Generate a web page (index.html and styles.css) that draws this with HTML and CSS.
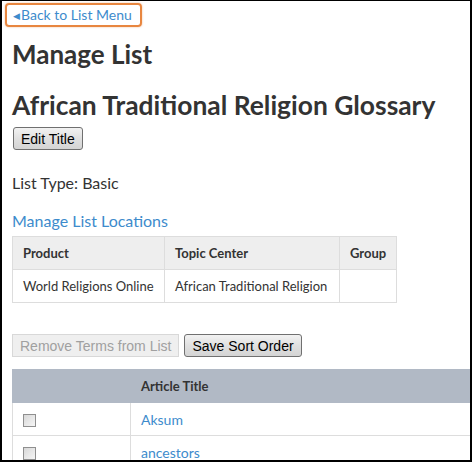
FILE: index.html
```html
<!DOCTYPE html>
<html lang="en">
<head>
    <meta charset="UTF-8">
    <title>Manage List</title>
    <link rel="stylesheet" href="styles.css">
</head>
<body>
    <div class="frame">
        <div class="row back-row">
            <a class="back-link" href="#"><span class="arrow">&#9664;</span>Back to List Menu</a>
        </div>
        <h1>Manage List</h1>
        <h1 class="list-title">African Traditional Religion Glossary</h1>
        <div class="row title-actions">
            <button class="btn">Edit Title</button>
        </div>
        <p class="list-type">List Type: Basic</p>
        <a class="section-link" href="#">Manage List Locations</a>
        <table class="locations">
            <tr>
                <th class="col-product">Product</th>
                <th class="col-topic">Topic Center</th>
                <th>Group</th>
            </tr>
            <tr>
                <td>World Religions Online</td>
                <td>African Traditional Religion</td>
                <td></td>
            </tr>
        </table>
        <div class="row actions">
            <button class="btn" disabled>Remove Terms from List</button>
            <button class="btn">Save Sort Order</button>
        </div>
        <table class="terms">
            <tr>
                <th class="col-check"></th>
                <th>Article Title</th>
            </tr>
            <tr>
                <td><input type="checkbox"></td>
                <td><a href="#">Aksum</a></td>
            </tr>
            <tr>
                <td><input type="checkbox"></td>
                <td><a href="#">ancestors</a></td>
            </tr>
        </table>
    </div>
</body>
</html>
```

FILE: styles.css
```css
body {
    margin: 0;
    font-family: Lato, "Open Sans", sans-serif;
    color: #333;
    background: #fff;
}
.frame {
    width: 472px;
    height: 462px;
    box-sizing: border-box;
    border: 2px solid #000;
    border-top-width: 1px;
    padding: 0 0 0 10px;
    overflow: hidden;
}
a {
    color: #3d8bcc;
    text-decoration: none;
}
.row {
    display: flex;
    align-items: flex-start;
}
.back-row {
    margin: 2px 0 0 -7px;
}
.back-link {
    display: block;
    padding: 2px 8px 2px 6px;
    border: 2px solid #e8863f;
    border-radius: 4px;
    box-shadow: 0 0 2px rgba(232, 134, 63, 0.6);
    font-size: 14px;
    line-height: 15px;
}
.back-link .arrow {
    font-size: 9px;
    vertical-align: 1px;
    margin-right: 1px;
}
h1 {
    font-size: 26px;
    font-weight: bold;
    margin: 11px 0 0;
    line-height: 32px;
}
.list-title {
    font-size: 26.4px;
    margin-top: 19px;
}
.btn {
    font-family: Arial, "Liberation Sans", sans-serif;
    font-size: 14px;
    color: #000;
    padding: 0 7px;
    height: 23px;
    border: 1px solid #707070;
    border-radius: 3px;
    background: linear-gradient(#f2f2f2, #e0e0e0 50%, #d4d4d4);
}
.btn:disabled {
    color: #a0a0a0;
    border-color: #d8d8d8;
    background: #efefef;
    border-radius: 0;
}
.title-actions {
    margin: 6px 0 0 1px;
}
.list-type {
    font-size: 16px;
    line-height: 20px;
    margin: 23px 0 0;
}
.section-link {
    display: block;
    font-size: 16px;
    line-height: 20px;
    margin-top: 18px;
}
table {
    border-collapse: collapse;
    font-size: 13px;
}
th, td {
    border: 1px solid #ddd;
    text-align: left;
    padding: 0 10px;
    height: 32px;
}
.locations {
    margin-top: 5px;
}
.locations th {
    background: #eee;
}
.col-product {
    width: 131px;
}
.col-topic {
    width: 154px;
}
.actions {
    margin-top: 31px;
    gap: 5px;
}
.terms {
    margin-top: 12px;
    width: 460px;
}
.terms th {
    background: #b1b9c5;
    border-color: #b1b9c5;
    height: 32px;
}
.terms td {
    border-left: none;
    border-right: none;
}
.terms td:first-child {
    border-left: 1px solid #ddd;
}
.terms td + td {
    border-left: 1px solid #ddd;
    font-size: 14px;
}
.col-check {
    width: 97px;
}
.terms input {
    appearance: none;
    margin: 0;
    width: 13px;
    height: 13px;
    vertical-align: middle;
    border: 1px solid #8f8f8f;
    background: linear-gradient(135deg, #d8d8d8, #f6f6f6);
}
```
